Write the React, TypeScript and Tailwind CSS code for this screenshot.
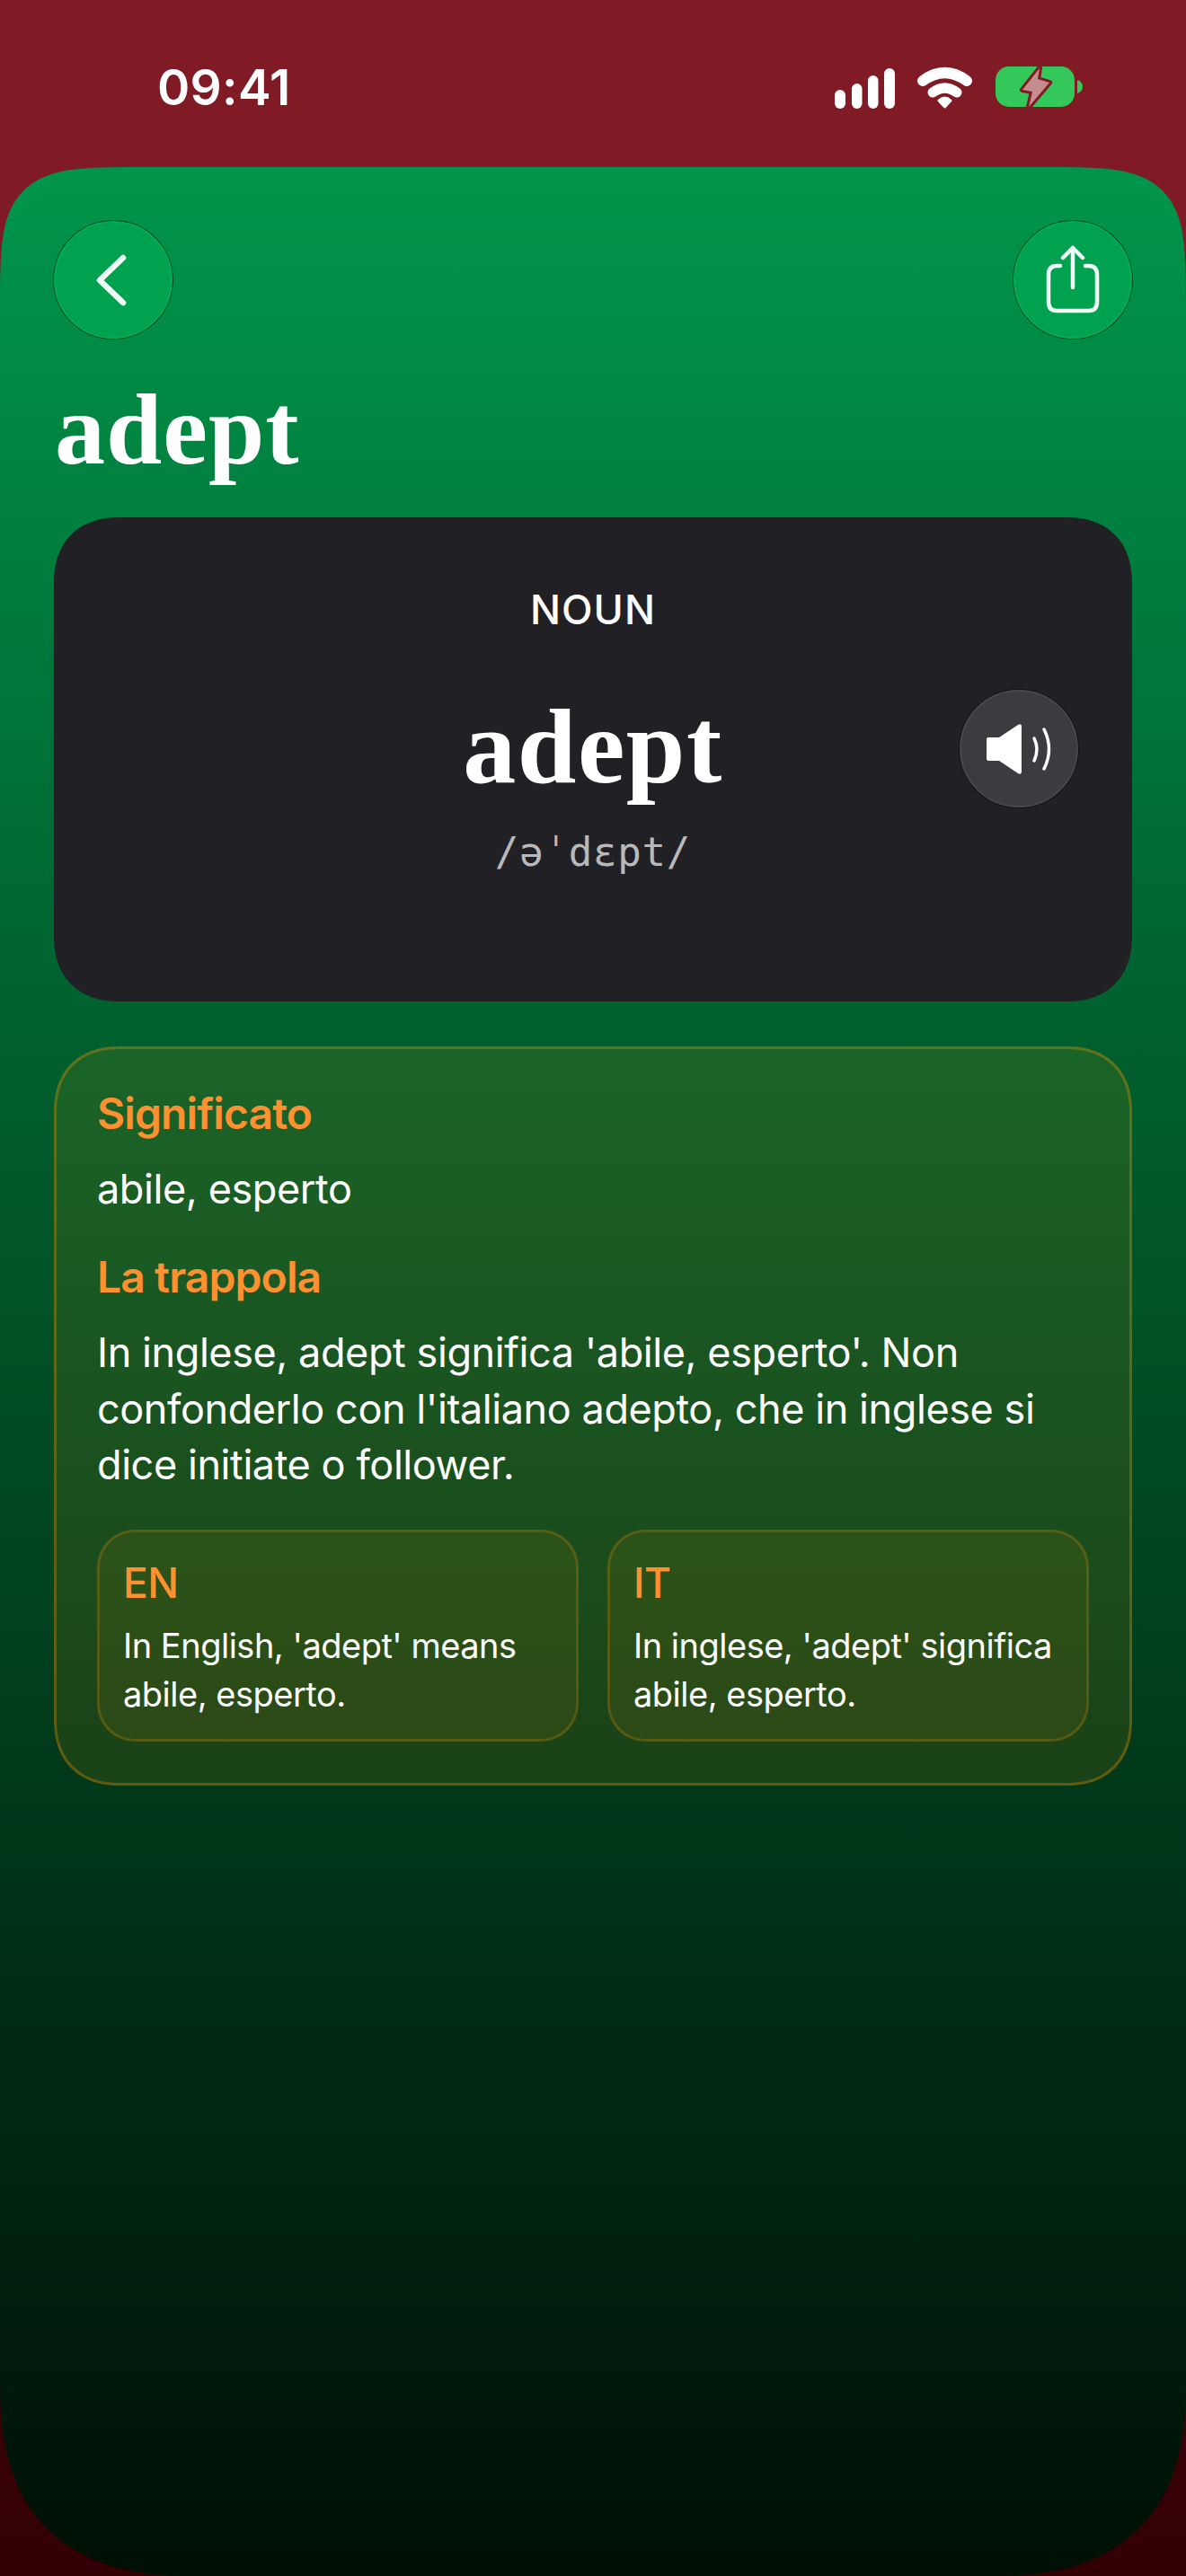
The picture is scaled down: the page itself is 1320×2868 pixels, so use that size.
export default function App() {
  return (
    <div className="w-[1320px] h-[2868px] flex flex-col bg-[linear-gradient(180deg,#801a25_0%,#801a25_10%,#320004_100%)] font-['Inter',sans-serif] text-white">
      {/* STATUS BAR */}
      <div className="h-[186px] shrink-0 flex items-start justify-between pt-[64px] pl-[175px] pr-[115px]">
        <span className="text-[55px] leading-[66px] font-semibold tracking-[0.3px]">09:41</span>
        <StatusIcons />
      </div>

      {/* SHEET */}
      <div className="flex-1 rounded-t-[165px] rounded-b-[215px] [corner-shape:squircle_squircle_superellipse(1.3)_superellipse(1.3)] bg-[linear-gradient(180deg,#00964a_0%,#00602e_36%,#000f05_100%)] px-[60px] pt-[60px]">
        <div className="flex justify-between">
          <RoundButton>
            <svg width="40" height="62" viewBox="0 0 40 62" fill="none" stroke="#effff8" strokeWidth="6.5" strokeLinecap="round" strokeLinejoin="round" className="-ml-[4px]">
              <path d="M33 6 L7 31 L33 56" />
            </svg>
          </RoundButton>
          <RoundButton>
            <svg width="64" height="76" viewBox="0 0 64 76" fill="none" stroke="#effff8" strokeWidth="4.5" strokeLinecap="round" strokeLinejoin="round" className="-mt-[2px]">
              <path d="M18 23 H14 Q5 23 5 33 V63 Q5 73 14 73 H50 Q59 73 59 63 V33 Q59 23 50 23 H46" />
              <path d="M32 3 V47" />
              <path d="M21 14 L32 3 L43 14" />
            </svg>
          </RoundButton>
        </div>

        <h1 className="mt-[39px] ml-[1px] font-['Liberation_Serif',serif] font-bold text-[112px] leading-[124px] tracking-[1px]">adept</h1>

        {/* WORD CARD */}
        <div className="relative mt-[36px] h-[539px] rounded-[74px] [corner-shape:superellipse(1.2)] bg-[#212025] flex flex-col items-center pt-[75px]">
          <div className="text-[45px] leading-[56px] font-medium tracking-[1px]">NOUN</div>
          <div className="mt-[60px] font-['Liberation_Serif',serif] font-bold text-[118px] leading-[130px] tracking-[1.5px]">adept</div>
          <div className="mt-[26px] font-['DejaVu_Sans_Mono',monospace] text-[44px] leading-[52px] tracking-[0.8px] text-[#b9b9bb]">/əˈdɛpt/</div>
          <button className="absolute right-[60px] top-[192px] w-[132px] h-[131px] rounded-full bg-[#3b3b40] border-2 border-[#47474c] shadow-[0_0_0_1px_#111] flex items-center justify-center">
            <svg width="74" height="58" viewBox="0 0 74 58" fill="none">
              <path d="M3 16 Q1 16 1 18 V40 Q1 42 3 42 H15 L36 56 Q40 58 40 54 V4 Q40 0 36 2 L15 16 Z" fill="#fff" />
              <path d="M54 17 Q60 29 54 42" stroke="#fff" strokeWidth="3.5" strokeLinecap="round" />
              <path d="M65 7 Q76 29 65 51" stroke="#fff" strokeWidth="3.5" strokeLinecap="round" />
            </svg>
          </button>
        </div>

        {/* DETAIL CARD */}
        <div className="mt-[50px] rounded-[74px] [corner-shape:superellipse(1.2)] border-[3px] border-[#ff95004d] bg-[#ff95001a] px-[45px] pt-[42px] pb-[46px]">
          <div className="text-[48px] leading-[60px] font-semibold text-[#ff9030] tracking-[-0.9px]">Significato</div>
          <p className="mt-[23px] text-[45px] leading-[62px] tracking-[-0.4px]">abile, esperto</p>
          <div className="mt-[37px] text-[48px] leading-[60px] font-semibold text-[#ff9030] tracking-[-0.9px]">La trappola</div>
          <p className="mt-[23px] text-[45px] leading-[62.5px] tracking-[-0.42px]">
            In inglese, adept significa 'abile, esperto'. Non confonderlo con l'italiano adepto, che in inglese si dice initiate o follower.
          </p>
          <div className="mt-[40px] grid grid-cols-2 gap-[32px]">
            <LangCard lang="EN" text="In English, 'adept' means abile, esperto." />
            <LangCard lang="IT" text="In inglese, 'adept' significa abile, esperto." />
          </div>
        </div>
      </div>
    </div>
  );
}

function RoundButton({ children }: { children: React.ReactNode }) {
  return (
    <button className="w-[132px] h-[131px] rounded-full bg-[#00a24f] border-2 border-[#00ad56] shadow-[0_0_0_1px_rgba(0,40,20,0.7)] flex items-center justify-center">
      {children}
    </button>
  );
}

function LangCard({ lang, text }: { lang: string; text: string }) {
  return (
    <div className="h-[236px] rounded-[42px] border-[3px] border-[#ff950033] bg-[#ff950014] pl-[26px] pr-[10px] pt-[28px]">
      <div className="text-[46px] leading-[56px] font-medium text-[#ff9030] tracking-[-0.5px]">{lang}</div>
      <p className="mt-[15px] text-[38px] leading-[54px] tracking-[-0.5px]">{text}</p>
    </div>
  );
}

function StatusIcons() {
  return (
    <svg width="276" height="48" viewBox="0 0 276 48" fill="none" className="mt-[10px]">
      {/* signal */}
      <rect x="0" y="26" width="12" height="21" rx="6" fill="#fff" />
      <rect x="19" y="19" width="11.5" height="28" rx="5.75" fill="#fff" />
      <rect x="37" y="10" width="11.5" height="37" rx="5.75" fill="#fff" />
      <rect x="55" y="2" width="12" height="45" rx="6" fill="#fff" />
      {/* wifi */}
      <path d="M98 16 Q122.5 -2 147 16" stroke="#fff" strokeWidth="12" strokeLinecap="round" />
      <path d="M109 29 Q122.5 19 136 29" stroke="#fff" strokeWidth="11" strokeLinecap="round" />
      <path d="M116 38 Q122.5 32 129 38 L122.5 45 Z" fill="#fff" stroke="#fff" strokeWidth="3" strokeLinejoin="round" />
      {/* battery */}
      <rect x="179" y="0" width="88" height="45" rx="15" fill="#34c759" />
      <path d="M270 15 Q276 17 276 22.5 Q276 28 270 30 Z" fill="#34c759" />
      <path d="M228 2 L209 26 L220 28 L216 45 L239 18 L226 14 Z" fill="#c58c90" stroke="#801a25" strokeWidth="6" strokeLinejoin="round" paintOrder="stroke" />
    </svg>
  );
}
